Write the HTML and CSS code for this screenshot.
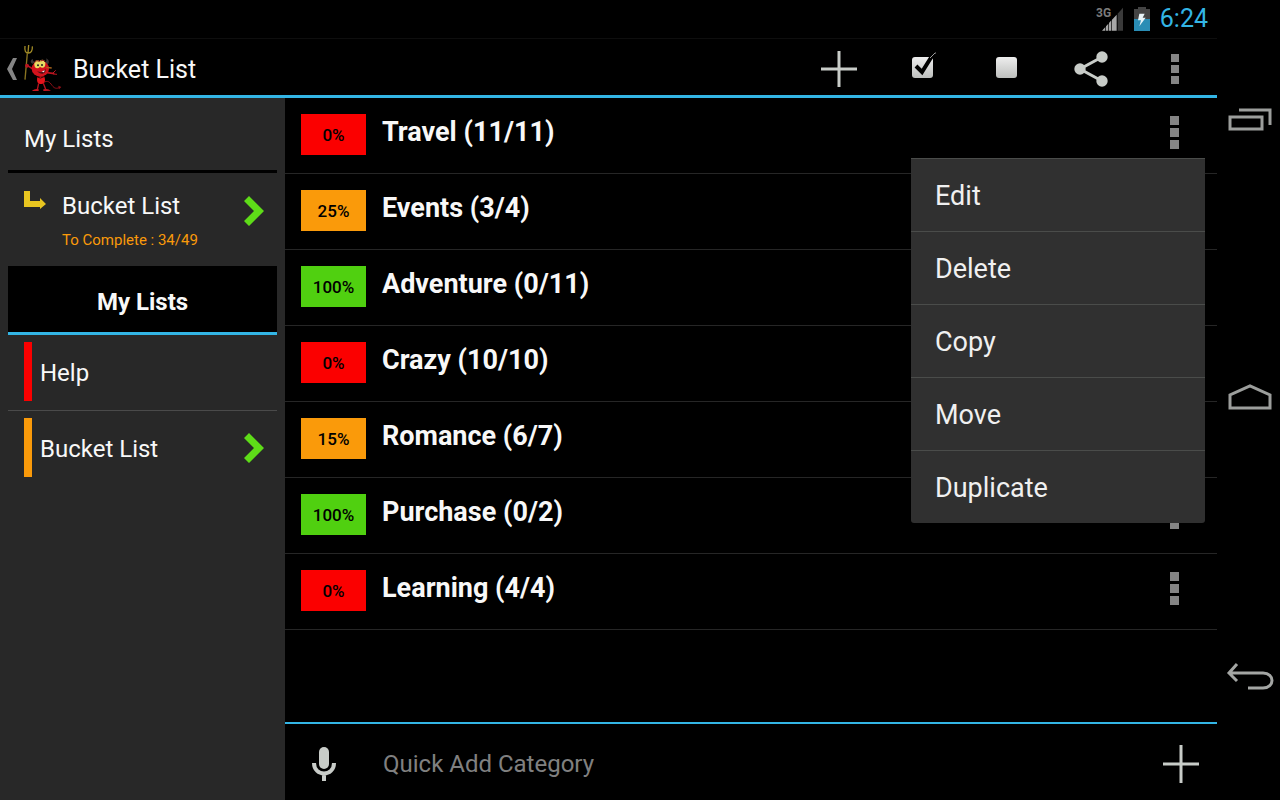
FILE: index.html
```html
<!DOCTYPE html>
<html lang="en">
<head>
    <meta charset="UTF-8">
    <meta name="viewport" content="width=device-width, initial-scale=1.0">
    <title>Bucket List</title>
    <link rel="stylesheet" href="styles.css">
</head>
<body>
    <div class="app">
        <div class="status">
            <svg class="signal" width="28" height="26" viewBox="0 0 84 78" aria-hidden="true">
                <path d="M18 74L28 63V74Z M30 61L37 53V74H30Z M39 51L46 43V74H39Z M48 41L62 26V74H48Z" fill="#a8a8a8"/>
                <path d="M65 23L81 5V74H65Z" fill="#3a3a3a"/>
                <text x="0" y="34" class="net">3G</text>
            </svg>
            <svg width="16" height="24" viewBox="0 0 48 72" aria-hidden="true">
                <path d="M12 0H36V6H48V36H0V6H12Z" fill="#444"/>
                <path d="M0 36H48V72H0Z" fill="#2a8db5"/>
                <path d="M16 20H32L26 32H35L16 58L21 40H12Z" fill="#e8f4f8"/>
            </svg>
            <span class="clock">6:24</span>
        </div>
        <header class="bar">
            <button class="up" aria-label="Back">
                <svg width="11" height="22" viewBox="0 0 11 22"><path d="M7 0H11L6 11L11 22H7L1 11Z" fill="#858585"/></svg>
            </button>
            <svg class="devil" width="40" height="50" viewBox="69 24 120 150" aria-hidden="true">
                <path d="M82 52L75 131" stroke="#8a7420" stroke-width="4" fill="none"/>
                <path d="M75 30C73 46 77 51 85 51S98 45 97 31M86 27L84 51" stroke="#a08a26" stroke-width="4" fill="none"/>
                <path d="M130 140C143 132 148 137 156 148S170 158 181 154" stroke="#8e1018" stroke-width="3" fill="none"/>
                <path d="M175 149L184 153L177 160Z" fill="#8e1018"/>
                <path d="M101 101L82 88M141 110L163 113" stroke="#b81420" stroke-width="5" fill="none"/>
                <circle cx="81" cy="89" r="6" fill="#b81420"/>
                <path d="M157 113L167 103M160 114L171 115" stroke="#c01520" stroke-width="3"/>
                <path d="M97 83C89 79 92 71 99 69C97 76 103 76 106 79ZM135 78C141 76 140 71 138 67C149 72 150 84 139 88Z" fill="#3b3436"/>
                <ellipse cx="121" cy="98" rx="26" ry="24" fill="#d3121c"/>
                <path d="M112 123C108 142 118 145 125 144C135 143 138 132 132 121Z" fill="#e3131b"/>
                <path d="M116 142L112 161M130 142L137 160" stroke="#b81420" stroke-width="4"/>
                <path d="M96 164Q106 156 116 160V165H97ZM130 165V160Q143 156 153 164Z" fill="#c81520"/>
                <ellipse cx="112" cy="85" rx="9" ry="12" fill="#e9dc63"/>
                <ellipse cx="127" cy="83" rx="9" ry="12" fill="#e9dc63"/>
                <path d="M103 80Q110 70 119 76M122 75Q130 68 135 78" stroke="#8e1018" stroke-width="3" fill="none"/>
                <circle cx="114" cy="88" r="3" fill="#222"/>
                <circle cx="126" cy="87" r="3" fill="#222"/>
                <path d="M111 105Q129 113 136 98Q140 109 128 113Q117 114 111 105Z" fill="#551018"/>
                <path d="M125 107L134 103L132 109Z" fill="#eee"/>
                <path d="M139 94L155 96" stroke="#a8641c" stroke-width="4"/>
                <path d="M112 123Q121 130 132 122" stroke="#300609" stroke-width="3" fill="none"/>
            </svg>
            <h1 class="title">Bucket List</h1>
            <button class="action" aria-label="Add">
                <svg width="36" height="36" viewBox="0 0 36 36"><path d="M18 0V36M0 18H36" stroke="#c8ccc8" stroke-width="3"/></svg>
            </button>
            <button class="action" aria-label="Check all">
                <svg width="26" height="36" viewBox="0 0 26 36">
                    <defs><linearGradient id="box" x1="0" y1="0" x2="0" y2="1"><stop offset="0" stop-color="#eee"/><stop offset="1" stop-color="#bdbfbd"/></linearGradient></defs>
                    <rect x="2" y="6" width="21" height="21" rx="3" fill="url(#box)"/>
                    <path d="M6 15L12 21L22 5" stroke="#000" stroke-width="4" fill="none"/>
                    <path d="M20 7L25 2H27" stroke="#999" fill="none"/>
                </svg>
            </button>
            <button class="action" aria-label="Uncheck all">
                <svg width="26" height="36" viewBox="0 0 26 36"><rect x="2" y="6" width="21" height="21" rx="3" fill="url(#box)"/></svg>
            </button>
            <button class="action" aria-label="Share">
                <svg width="34" height="36" viewBox="0 0 34 36">
                    <path d="M28 6L6 18L28 30" stroke="#c8ccc8" stroke-width="3" fill="none"/>
                    <circle cx="28" cy="6" r="5.7" fill="#c8ccc8"/><circle cx="6" cy="18" r="5.7" fill="#c8ccc8"/><circle cx="28" cy="30" r="5.7" fill="#c8ccc8"/>
                </svg>
            </button>
            <button class="action" aria-label="More options">
                <svg width="8" height="30" viewBox="0 0 8 30"><path d="M0 0H8V8H0ZM0 11H8V19H0ZM0 22H8V30H0Z" fill="#858585"/></svg>
            </button>
        </header>
        <div class="body">
            <aside class="side">
                <h2 class="side-title">My Lists</h2>
                <a class="current" href="#bucket">
                    <svg class="corner" width="22" height="19" viewBox="0 0 22 19"><path d="M0 0H6V10H16V7L22 13L16 18V16H0Z" fill="#e8c520"/></svg>
                    <span class="current-text">Bucket List<small class="left">To Complete : 34/49</small></span>
                    <svg class="arrow" width="20" height="30" viewBox="0 0 20 30"><path d="M5 0L20 15L5 30L0 25L10 15L0 5Z" fill="#5edc18"/></svg>
                </a>
                <h2 class="group">My Lists</h2>
                <ul class="lists">
                    <li><a class="list" href="#help"><span class="mark red"></span><span class="list-name">Help</span></a></li>
                    <li><a class="list" href="#bucket"><span class="mark orange"></span><span class="list-name">Bucket List</span>
                        <svg class="arrow" width="20" height="30" viewBox="0 0 20 30"><path d="M5 0L20 15L5 30L0 25L10 15L0 5Z" fill="#5edc18"/></svg></a></li>
                </ul>
            </aside>
            <main class="main">
                <ul class="rows">
                    <li class="row">
                        <span class="badge red">0%</span><span class="name">Travel (11/11)</span>
                        <button class="more" aria-label="Travel options"><i></i><i></i><i></i></button>
                        <div class="menu" role="menu">
                            <button class="item" role="menuitem">Edit</button>
                            <button class="item" role="menuitem">Delete</button>
                            <button class="item" role="menuitem">Copy</button>
                            <button class="item" role="menuitem">Move</button>
                            <button class="item" role="menuitem">Duplicate</button>
                        </div>
                    </li>
                    <li class="row">
                        <span class="badge orange">25%</span><span class="name">Events (3/4)</span>
                        <button class="more" aria-label="Events options"><i></i><i></i><i></i></button>
                    </li>
                    <li class="row">
                        <span class="badge green">100%</span><span class="name">Adventure (0/11)</span>
                        <button class="more" aria-label="Adventure options"><i></i><i></i><i></i></button>
                    </li>
                    <li class="row">
                        <span class="badge red">0%</span><span class="name">Crazy (10/10)</span>
                        <button class="more" aria-label="Crazy options"><i></i><i></i><i></i></button>
                    </li>
                    <li class="row">
                        <span class="badge orange">15%</span><span class="name">Romance (6/7)</span>
                        <button class="more" aria-label="Romance options"><i></i><i></i><i></i></button>
                    </li>
                    <li class="row">
                        <span class="badge green">100%</span><span class="name">Purchase (0/2)</span>
                        <button class="more" aria-label="Purchase options"><i></i><i></i><i></i></button>
                    </li>
                    <li class="row">
                        <span class="badge red">0%</span><span class="name">Learning (4/4)</span>
                        <button class="more" aria-label="Learning options"><i></i><i></i><i></i></button>
                    </li>
                </ul>
                <form class="quick">
                    <button type="button" class="mic" aria-label="Speak">
                        <svg width="24" height="34" viewBox="0 0 24 34">
                            <rect x="7" y="0" width="10" height="22" rx="5" fill="#c8ccc8"/>
                            <path d="M2 16C2 30 22 30 22 16M12 26V34" stroke="#c8ccc8" stroke-width="4" fill="none"/>
                        </svg>
                    </button>
                    <input class="entry" type="text" placeholder="Quick Add Category" aria-label="Quick Add Category">
                    <button type="button" class="plus" aria-label="Add category">
                        <svg width="36" height="38" viewBox="0 0 36 38"><path d="M18 0V38M0 19H36" stroke="#c8ccc8" stroke-width="3"/></svg>
                    </button>
                </form>
            </main>
        </div>
    </div>
    <nav class="keys">
        <button class="key" aria-label="Recent apps">
            <svg width="46" height="24" viewBox="0 0 46 24"><path d="M3 10H35V22H3ZM12 3H43V18" stroke="#9c9e9c" stroke-width="3" fill="none"/></svg>
        </button>
        <button class="key" aria-label="Home">
            <svg width="46" height="28" viewBox="0 0 46 28"><path d="M3 24V11L23 2L43 11V24Z" stroke="#9c9e9c" stroke-width="3" fill="none"/></svg>
        </button>
        <button class="key" aria-label="Back">
            <svg width="50" height="28" viewBox="0 0 50 28"><path d="M4 10H38C50 10 50 25 38 25H23M12 1L4 10L12 18" stroke="#a4a6a4" stroke-width="3" fill="none"/></svg>
        </button>
    </nav>
</body>
</html>
```
FILE: styles.css
```css
*
{
    box-sizing:border-box;
}
body
{
    margin:0;
    min-height:100vh;
    display:flex;
    background-color:#000;
    color:#f8f8f8;
    font-family:Roboto,"Liberation Sans",sans-serif;
    font-size:24px;
    line-height:28px;
}
button
{
    display:flex;
    align-items:center;
    justify-content:center;
    padding:0;
    border:0;
    background:none;
    color:inherit;
    font:inherit;
    cursor:pointer;
}
a
{
    color:inherit;
    text-decoration:none;
}
h1,h2,ul
{
    margin:0;
    padding:0;
    font-size:24px;
    font-weight:normal;
    list-style:none;
}
.app
{
    flex:1;
    display:flex;
    flex-direction:column;
}
.status
{
    height:39px;
    padding-right:9px;
    border-bottom:1px solid #0e0e0e;
    display:flex;
    align-items:center;
    justify-content:flex-end;
    gap:10px;
}
.net
{
    font-size:36px;
    font-weight:bold;
    fill:#7c7c7c;
}
.clock
{
    color:#33b5e5;
    font-size:25px;
}
.bar
{
    height:59px;
    padding-top:3px;
    border-bottom:3px solid #33b5e5;
    display:flex;
    align-items:center;
}
.up
{
    width:23px;
}
.title
{
    flex:1;
    margin-left:10px;
    padding-top:2px;
    font-size:25px;
}
.action
{
    width:84px;
    height:53px;
}
.body
{
    flex:1;
    display:flex;
}
.side
{
    width:285px;
    padding:0 8px;
    background-color:#282828;
}
.side-title
{
    padding:27px 16px 17px;
    border-bottom:3px solid #000;
}
.current
{
    height:93px;
    padding:18px 13px 0 16px;
    display:flex;
    align-items:flex-start;
}
.current-text
{
    flex:1;
    padding:1px 0 0 16px;
}
.left
{
    display:block;
    padding-top:6px;
    color:#fa9a0a;
    font-size:15px;
}
.arrow
{
    margin-left:auto;
}
.current .arrow
{
    margin-top:5px;
}
.group
{
    height:69px;
    padding-top:22px;
    background-color:#000;
    border-bottom:3px solid #33b5e5;
    font-weight:bold;
    text-align:center;
}
.list
{
    height:75px;
    padding:7px 13px 9px 16px;
    display:flex;
    align-items:center;
}
.list-name
{
    padding-top:3px;
}
.lists li+li
{
    border-top:1px solid #4a4a4a;
}
.mark
{
    width:8px;
    height:59px;
    margin-right:8px;
}
.red
{
    background-color:#fb0000;
}
.orange
{
    background-color:#fa9a0a;
}
.green
{
    background-color:#50d010;
}
.main
{
    flex:1;
    display:flex;
    flex-direction:column;
}
.rows
{
    flex:1;
}
.row
{
    position:relative;
    height:76px;
    padding:16px 26px 0 16px;
    border-bottom:1px solid #262626;
    display:flex;
    align-items:flex-start;
}
.badge
{
    width:65px;
    height:41px;
    padding-top:1px;
    margin-right:16px;
    color:#000;
    font-size:17px;
    font-weight:500;
    line-height:41px;
    text-align:center;
}
.name
{
    flex:1;
    padding-top:4px;
    font-size:27px;
    font-weight:bold;
}
.more
{
    width:34px;
    padding-top:2px;
    flex-direction:column;
    gap:3px;
}
.more i
{
    width:9px;
    height:9px;
    background-color:#858585;
}
/* open menu of the first row */
.menu
{
    position:absolute;
    top:60px;
    right:12px;
    z-index:1;
    width:294px;
    background-color:#303030;
    border-radius:0 0 3px 3px;
}
.item
{
    width:100%;
    height:73px;
    padding:2px 0 0 24px;
    border-top:1px solid #4a4c4a;
    justify-content:flex-start;
    color:#f0f0f0;
    font-size:27px;
}
.quick
{
    height:78px;
    padding-top:4px;
    border-top:2px solid #33b5e5;
    display:flex;
    align-items:center;
}
.mic
{
    width:78px;
}
.entry
{
    flex:1;
    min-width:0;
    padding:0 0 0 20px;
    border:0;
    outline:0;
    background:none;
    color:#f8f8f8;
    font:inherit;
}
.entry::placeholder
{
    color:#808080;
    opacity:1;
}
.plus
{
    width:72px;
}
.keys
{
    width:63px;
    padding:89px 0 93px;
    display:flex;
    flex-direction:column;
    justify-content:space-between;
}
.key
{
    height:60px;
    padding-left:3px;
}
```
